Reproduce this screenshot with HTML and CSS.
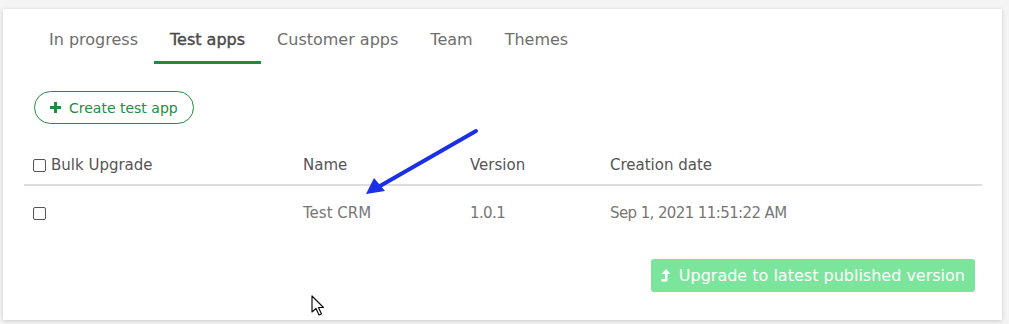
FILE: index.html
```html
<!DOCTYPE html>
<html lang="en">
<head>
    <meta charset="UTF-8">
    <title>Test apps</title>
    <link rel="stylesheet" href="styles.css">
</head>
<body>
    <div class="card">
        <div class="tabs">
            <div class="tab">In progress</div>
            <div class="tab active">Test apps</div>
            <div class="tab">Customer apps</div>
            <div class="tab">Team</div>
            <div class="tab">Themes</div>
        </div>

        <button class="btn-create">
            <svg width="11" height="11" viewBox="0 0 11 11"><path d="M4 0h3v4h4v3H7v4H4V7H0V4h4z" fill="#1e8c3e"/></svg>
            Create test app
        </button>

        <div class="table">
            <div class="row head">
                <div class="cell"><span class="box"></span>Bulk Upgrade</div>
                <div class="cell">Name</div>
                <div class="cell">Version</div>
                <div class="cell">Creation date</div>
            </div>
            <div class="row">
                <div class="cell"><span class="box"></span></div>
                <div class="cell">Test CRM</div>
                <div class="cell num">1.0.1</div>
                <div class="cell num">Sep 1, 2021 11:51:22 AM</div>
            </div>
        </div>

        <div class="actions">
            <button class="btn-upgrade">
                <svg width="10" height="14" viewBox="0 0 10 14"><path d="M5 0L9.5 5H6.5V12.5H0.5V10H4V5H0.5z" fill="#fff"/></svg>
                Upgrade to latest published version
            </button>
        </div>
    </div>

    <!-- annotation arrow drawn over the screenshot -->
    <svg class="annotation" width="1009" height="324" viewBox="0 0 1009 324">
        <line x1="476" y1="131" x2="380" y2="186" stroke="#1b2fe6" stroke-width="4" stroke-linecap="round"/>
        <path d="M366 194L374 178L385 191z" fill="#1b2fe6"/>
    </svg>

    <svg class="cursor" width="14" height="22" viewBox="0 0 14 22">
        <path d="M1 1V17L5 13.5L8 20L10.5 19L7.5 12.5H12.5z" fill="#fff" stroke="#111" stroke-width="1.2" stroke-linejoin="round"/>
    </svg>
</body>
</html>
```

FILE: styles.css
```css
body {
    margin: 0;
    background: #f4f4f4;
    font-family: "DejaVu Sans", sans-serif;
    font-size: 15px;
    width: 1009px;
    height: 324px;
    overflow: hidden;
    position: relative;
}

.card {
    background: #fff;
    margin: 9px 7px 0 3px;
    padding: 0 20px 28px 21px;
    box-shadow: 0 1px 4px rgba(0, 0, 0, 0.18);
}

.tabs {
    display: flex;
    margin-left: 9px;
}

.tab {
    padding: 21px 16px 11px;
    line-height: 20px;
    font-size: 16px;
    color: #6e6e6e;
    border-bottom: 3px solid transparent;
}

.tab.active {
    color: #4a4a4a;
    -webkit-text-stroke: 0.4px #4a4a4a;
    border-bottom-color: #1e8c3e;
}

.btn-create {
    display: flex;
    align-items: center;
    gap: 8px;
    margin: 27px 0 0 10px;
    height: 33px;
    padding: 0 15px;
    border: 1px solid #1e8c3e;
    border-radius: 17px;
    background: #fff;
    color: #1e8c3e;
    font-family: inherit;
    font-size: 14px;
}

.table {
    margin-top: 20px;
}

.row {
    display: grid;
    grid-template-columns: 270px 167px 140px 1fr;
    color: #777;
}

.row.head {
    color: #555;
    border-bottom: 2px solid #ddd;
}

.cell {
    padding: 11px 9px 9px;
    line-height: 20px;
    display: flex;
    align-items: center;
}

.row:not(.head) .cell {
    padding: 17px 9px 15px;
}

.num {
    letter-spacing: -0.6px;
}

.box {
    width: 11px;
    height: 11px;
    border: 1px solid #555;
    border-radius: 2px;
    margin-right: 5px;
}

.actions {
    display: flex;
    justify-content: flex-end;
    margin: 21px 7px 0 0;
}

.btn-upgrade {
    display: flex;
    align-items: center;
    gap: 8px;
    height: 33px;
    padding: 0 10px;
    border: none;
    border-radius: 3px;
    background: #7ce59c;
    color: #fff;
    font-family: inherit;
    font-size: 16px;
}

.annotation {
    position: absolute;
    left: 0;
    top: 0;
    pointer-events: none;
}

.cursor {
    position: absolute;
    left: 311px;
    top: 295px;
}
```
